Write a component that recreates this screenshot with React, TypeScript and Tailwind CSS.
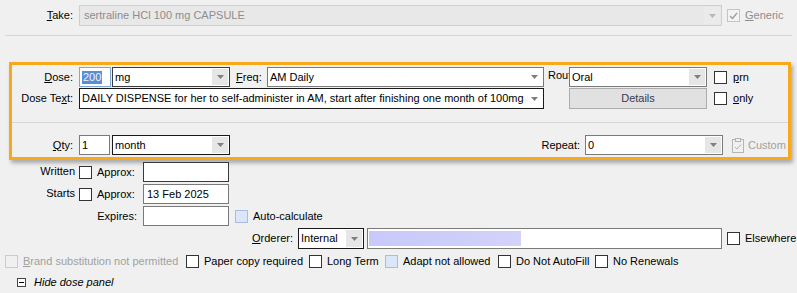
import React from "react";

function Arrow({ bg = "bg-[#e6e6e6]", fill = "#7f7f7f" }: { bg?: string; fill?: string }) {
  return (
    <div className={`w-[16px] my-[1px] mr-[1px] flex items-center justify-center ${bg}`}>
      <svg width="7" height="4" viewBox="0 0 7 4">
        <path d="M0 0H7L3.5 4Z" fill={fill} />
      </svg>
    </div>
  );
}

function Combo({
  className,
  children,
  arrowBg,
  arrowFill,
  textClass = "text-black",
}: {
  className: string;
  children?: React.ReactNode;
  arrowBg?: string;
  arrowFill?: string;
  textClass?: string;
}) {
  return (
    <div className={`flex items-stretch border ${className}`}>
      <div className={`flex-1 flex items-center pl-[2px] whitespace-nowrap overflow-hidden ${textClass}`}>{children}</div>
      <Arrow bg={arrowBg} fill={arrowFill} />
    </div>
  );
}

function Cb({ kind = "normal", className = "" }: { kind?: "normal" | "disabled" | "blue" | "checked"; className?: string }) {
  if (kind === "checked")
    return (
      <div className={`w-[13px] h-[13px] border border-[#c4c4c4] bg-[#f3f3f3] flex items-center justify-center shrink-0 ${className}`}>
        <svg width="9" height="8" viewBox="0 0 9 8">
          <path d="M1 4L3.5 6.5L8 1" stroke="#9a9a9a" strokeWidth="1.2" fill="none" />
        </svg>
      </div>
    );
  const cls =
    kind === "disabled"
      ? "border-[#cccccc] bg-[#f0f0f0]"
      : kind === "blue"
      ? "border-[#a9bde3] bg-[#dbe6f8]"
      : "border-[#333333] bg-white";
  return <div className={`block w-[13px] h-[13px] border shrink-0 ${cls} ${className}`} />;
}

function Field({ className, children }: { className: string; children?: React.ReactNode }) {
  return (
    <div className={`flex items-center pl-[2px] border bg-white whitespace-nowrap overflow-hidden ${className}`}>{children}</div>
  );
}

export default function App() {
  return (
    <div className="w-[797px] h-[293px] bg-[#f0f0f0] overflow-hidden text-[11px] leading-[13px] text-black font-['Liberation_Sans',Arial,sans-serif]">
      {/* Take row */}
      <div className="flex items-center h-[21px] mt-[5px]">
        <div className="w-[79px] pr-[6px] text-right">
          <span className="underline">T</span>ake:
        </div>
        <Combo
          className="w-[643px] h-[21px] border-[#cfcfcf] bg-[#e8e8e8]"
          arrowBg="bg-[#ebebeb]"
          arrowFill="#b8b8b8"
          textClass="text-[#8d8d8d] pl-[4px]"
        >
          sertraline HCl 100 mg CAPSULE
        </Combo>
        <Cb kind="checked" className="ml-[5px]" />
        <span className="ml-[5px] text-[#8d8d8d]">
          <span className="underline">G</span>eneric
        </span>
      </div>
      <div className="mt-[9px] mx-[5px] h-px bg-[#d5d5d5]" />

      {/* Highlighted dose panel */}
      <div className="mt-[26px] ml-[9px] w-[782px] h-[98px] border-[3px] border-[#f7a81b] shadow-[2px_3px_4px_rgba(0,0,0,0.3)] flex flex-col">
        {/* Dose row */}
        <div className="flex items-center h-[20px] mt-[2px]">
          <div className="w-[67px] pr-[6px] text-right">
            <span className="underline">D</span>ose:
          </div>
          <div className="w-[32px] h-[20px] border border-[#7ea6d6] bg-white flex items-center pl-[2px]">
            <span className="bg-[#5a8ed6] text-[#eef3fa] px-[1px]">200</span>
          </div>
          <Combo className="ml-[1px] w-[118px] h-[20px] border-[#3c3c3c] bg-white">mg</Combo>
          <div className="ml-[6px] w-[31px]">
            <span className="underline">F</span>req:
          </div>
          <Combo className="w-[277px] h-[20px] border-[#7a7a7a] bg-white" arrowBg="bg-white">
            AM Daily
          </Combo>
          <div className="ml-[4px] w-[21px] overflow-hidden whitespace-nowrap self-start mt-[2px]">Rout</div>
          <Combo className="w-[138px] h-[20px] border-[#7a7a7a] bg-white">Oral</Combo>
          <Cb className="ml-[7px]" />
          <span className="ml-[6px]">
            <span className="underline">p</span>rn
          </span>
        </div>
        {/* Dose text row */}
        <div className="flex items-center h-[21px] mt-[1px]">
          <div className="w-[67px] pr-[6px] text-right whitespace-nowrap">
            Dose Te<span className="underline">x</span>t:
          </div>
          <Combo className="w-[465px] h-[21px] border-[#1a1a1a] bg-white" arrowBg="bg-white">
            DAILY DISPENSE for her to self-administer in AM, start after finishing one month of 100mg per day
          </Combo>
          <button className="ml-[25px] w-[138px] h-[21px] border border-[#adadad] bg-[#e1e1e1] text-[#3a3a50] flex items-center justify-center">
            Details
          </button>
          <Cb className="ml-[7px]" />
          <span className="ml-[6px]">
            <span className="underline">o</span>nly
          </span>
        </div>
        <div className="mt-[13px] h-px bg-[#d5d5d5]" />
        {/* Qty row */}
        <div className="flex items-center h-[20px] mt-[12px]">
          <div className="w-[67px] pr-[6px] text-right">
            <span className="underline">Q</span>ty:
          </div>
          <Field className="w-[31px] h-[20px] border-[#7a7a7a]">1</Field>
          <Combo className="ml-[2px] w-[118px] h-[20px] border-[#1a1a1a] bg-white">month</Combo>
          <div className="w-[355px] pr-[5px] text-right">Repeat:</div>
          <Combo className="w-[138px] h-[20px] border-[#7a7a7a] bg-white">0</Combo>
          <span className="ml-[9px] flex items-center">
            <svg width="12" height="15" viewBox="0 0 12 15">
              <rect x="0.5" y="1.5" width="11" height="13" fill="none" stroke="#b4b4b4" />
              <rect x="3.5" y="0.5" width="5" height="3" fill="#f0f0f0" stroke="#b4b4b4" />
              <path d="M3 9L5 11L9 6.5" stroke="#b4b4b4" fill="none" />
            </svg>
          </span>
          <span className="ml-[4px] text-[#a0a0a0]">Custom</span>
        </div>
      </div>

      {/* Written */}
      <div className="flex items-center h-[20px] mt-[2px]">
        <div className="w-[79px] pr-[4px] text-right self-start mt-[3px]">Written</div>
        <Cb />
        <div className="ml-[5px] w-[46px]">Approx:</div>
        <Field className="w-[86px] h-[20px] border-[#3a3a3a]" />
      </div>
      {/* Starts */}
      <div className="flex items-center h-[20px] mt-[2px]">
        <div className="w-[79px] pr-[4px] text-right self-start mt-[3px]">Starts</div>
        <Cb />
        <div className="ml-[5px] w-[46px]">Approx:</div>
        <Field className="w-[86px] h-[20px] border-[#7a7a7a] pl-[3px]">13 Feb 2025</Field>
      </div>
      {/* Expires */}
      <div className="flex items-center h-[20px] mt-[2px]">
        <div className="w-[143px] pr-[6px] text-right">Expires:</div>
        <Field className="w-[86px] h-[20px] border-[#7a7a7a]" />
        <Cb kind="blue" className="ml-[6px]" />
        <span className="ml-[5px]">Auto-calculate</span>
      </div>
      {/* Orderer */}
      <div className="flex items-center h-[21px] mt-[2px]">
        <div className="w-[298px] pr-[5px] text-right">
          <span className="underline">O</span>rderer:
        </div>
        <Combo className="w-[66px] h-[21px] border-[#1a1a1a] bg-white">Internal</Combo>
        <div className="ml-[3px] w-[355px] h-[21px] border border-[#7a7a7a] bg-white flex items-stretch p-[1px]">
          <div className="w-[152px] bg-gradient-to-r from-[#c8c8fb] to-[#d2d2fa] my-[1px]" />
        </div>
        <Cb className="ml-[5px]" />
        <span className="ml-[5px] whitespace-nowrap">Elsewhere</span>
      </div>
      {/* Checkbox row */}
      <div className="flex items-center h-[13px] mt-[6px] ml-[5px] whitespace-nowrap">
        <Cb kind="disabled" />
        <span className="ml-[5px] w-[163px] text-[#a0a0a0]">
          <span className="underline">B</span>rand substitution not permitted
        </span>
        <Cb />
        <span className="ml-[5px] w-[105px]">Paper copy required</span>
        <Cb />
        <span className="ml-[5px] w-[58px]">Long Term</span>
        <Cb kind="blue" />
        <span className="ml-[5px] w-[95px]">Adapt not allowed</span>
        <Cb />
        <span className="ml-[5px] w-[79px]">Do Not AutoFill</span>
        <Cb />
        <span className="ml-[5px]">No Renewals</span>
      </div>
      {/* Hide dose panel */}
      <div className="flex items-center h-[13px] mt-[8px]">
        <div className="ml-[17px] w-[9px] h-[9px] border border-[#444] bg-white flex items-center justify-center">
          <div className="w-[5px] h-px bg-black" />
        </div>
        <span className="ml-[8px] italic">Hide dose panel</span>
      </div>
    </div>
  );
}
